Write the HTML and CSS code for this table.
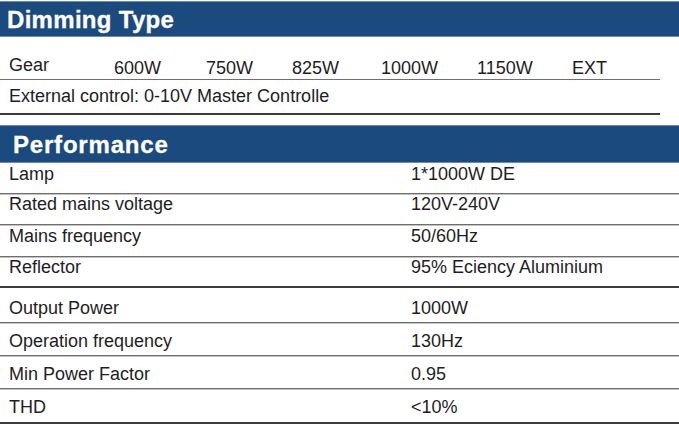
FILE: index.html
```html
<!DOCTYPE html>
<html>
<head>
<meta charset="utf-8">
<link rel="stylesheet" href="styles.css">
</head>
<body>
<div class="sheet">
  <div class="head head-dim"><span class="head-title">Dimming Type</span></div>
  <div class="gear-row">
    <span class="gear-label">Gear</span>
    <span class="gear-val">600W</span>
    <span class="gear-val">750W</span>
    <span class="gear-val">825W</span>
    <span class="gear-val">1000W</span>
    <span class="gear-val">1150W</span>
    <span class="gear-val">EXT</span>
  </div>
  <div class="ext-row">External control: 0-10V Master Controlle</div>

  <div class="head head-perf"><span class="head-title">Performance</span></div>
  <div class="perf">
    <div class="row r-upper h31"><span>Lamp</span><span>1*1000W DE</span></div>
    <div class="row r-upper h31 pt0"><span>Rated mains voltage</span><span>120V-240V</span></div>
    <div class="row r-upper h32"><span>Mains frequency</span><span>50/60Hz</span></div>
    <div class="row r-upper h31 pt0 dark"><span>Reflector</span><span>95% Eciency Aluminium</span></div>
    <div class="row r-lower h35 pt10"><span>Output Power</span><span>1000W</span></div>
    <div class="row r-lower h33"><span>Operation frequency</span><span>130Hz</span></div>
    <div class="row r-lower h33"><span>Min Power Factor</span><span>0.95</span></div>
    <div class="row r-lower h35 dark"><span>THD</span><span>&lt;10%</span></div>
  </div>
</div>
</body>
</html>
```

FILE: styles.css
```css
html, body {
  margin: 0;
  padding: 0;
  background: #ffffff;
}

body {
  font-family: "Liberation Sans", Arial, sans-serif;
  color: #1e1e1e;
  width: 679px;
  height: 426px;
  overflow: hidden;
}

.sheet {
  padding-top: 1px;
}

.head {
  background: #1b4a7e;
  border-top: 1px solid #6a8cb3;
  border-bottom: 1px solid #6a8cb3;
  box-sizing: border-box;
  color: #ffffff;
  font-weight: bold;
  font-size: 24px;
  line-height: 22px;
  -webkit-text-stroke: 0.3px #ffffff;
}

.head-dim {
  height: 36px;
  padding: 7px 0 0 7px;
  letter-spacing: 0.3px;
}

.head-perf {
  height: 38px;
  padding: 8px 0 0 13px;
  margin-top: 10px;
  letter-spacing: 0.8px;
}

.gear-row {
  width: 660px;
  height: 43px;
  box-sizing: border-box;
  padding: 18px 0 0 9px;
  border-bottom: 1px solid #707070;
  display: grid;
  grid-template-columns: 105px 92px 86px 89px 96px 95px auto;
  font-size: 18px;
  line-height: 20px;
}

.gear-val {
  position: relative;
  top: 3px;
}

.ext-row {
  width: 660px;
  height: 35px;
  box-sizing: border-box;
  padding: 6px 0 0 9px;
  border-bottom: 2px solid #3c3c3c;
  font-size: 18px;
  line-height: 20px;
}

.row {
  display: grid;
  grid-template-columns: 402px 1fr;
  box-sizing: border-box;
  padding-left: 9px;
  font-size: 18px;
  line-height: 20px;
  border-bottom: 1px solid #6e6e6e;
  box-shadow: 0 1px 0 #c4c4c4;
}

.r-upper {
  padding-top: 1px;
}

.r-lower {
  padding-top: 8px;
}

.pt0 {
  padding-top: 0;
}

.pt10 {
  padding-top: 10px;
}

.h31 { height: 31px; }
.h32 { height: 32px; }
.h33 { height: 33px; }
.h35 { height: 35px; }

.row.dark {
  border-bottom: 2px solid #3c3c3c;
  box-shadow: none;
}
```
